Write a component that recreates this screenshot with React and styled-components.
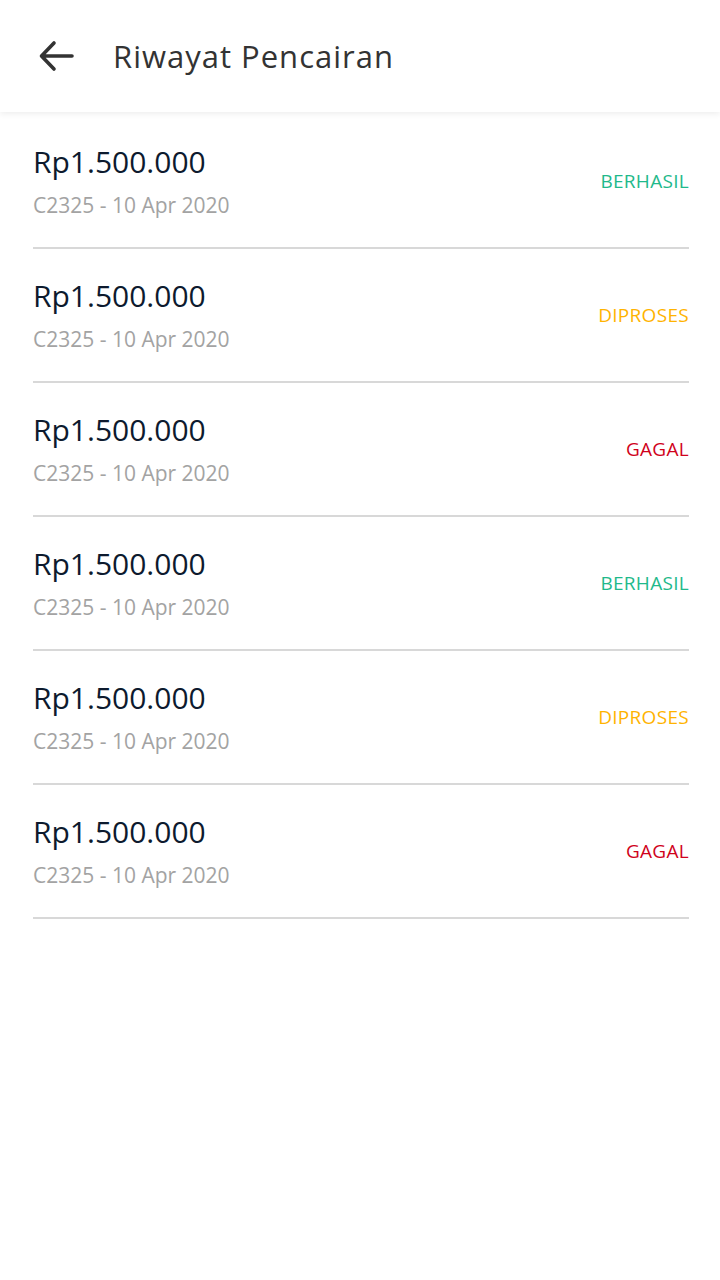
import React from "react";
import styled, { createGlobalStyle } from "styled-components";

const Global = createGlobalStyle`
  html, body { margin: 0; padding: 0; background: #fff; }
  body { font-family: "Open Sans", "Noto Sans", sans-serif; }
`;

const Page = styled.div`
  width: 720px;
  min-height: 1280px;
  background: #fff;
`;

const Header = styled.header`
  height: 112px;
  display: flex;
  align-items: center;
  padding-left: 38px;
  box-sizing: border-box;
  background: #fff;
  box-shadow: 0 2px 6px rgba(0, 0, 0, 0.07);
  position: relative;
  z-index: 1;
`;

const BackButton = styled.button`
  border: 0;
  background: none;
  padding: 0;
  width: 36px;
  height: 36px;
  display: flex;
  align-items: center;
  justify-content: center;
  cursor: pointer;
`;

const Title = styled.h1`
  margin: 0 0 0 39px;
  font-size: 31px;
  font-weight: 500;
  color: #333;
  letter-spacing: 1px;
`;

const List = styled.ul`
  list-style: none;
  margin: 0;
  padding: 3px 31px 0 33px;
`;

const Row = styled.li`
  height: 134px;
  box-sizing: border-box;
  border-bottom: 2px solid #d8d8d8;
  display: flex;
  justify-content: space-between;
  align-items: center;
`;

const Info = styled.div`
  display: flex;
  flex-direction: column;
  gap: 12px;
`;

const Amount = styled.div`
  font-size: 30px;
  line-height: 36px;
  color: #0d1a2e;
`;

const Meta = styled.div`
  font-size: 21px;
  line-height: 26px;
  color: #a3a3a3;
`;

const statusColors = {
  BERHASIL: "#1fb98b",
  DIPROSES: "#ffb300",
  GAGAL: "#d0021b",
};

const Status = styled.div`
  font-size: 19px;
  letter-spacing: 0.3px;
  color: ${(p) => statusColors[p.$status]};
`;

const rows = ["BERHASIL", "DIPROSES", "GAGAL", "BERHASIL", "DIPROSES", "GAGAL"];

export default function App() {
  return (
    <Page>
      <Global />
      <Header>
        <BackButton aria-label="Kembali">
          <svg width="36" height="36" viewBox="0 0 36 36" fill="none">
            <path
              d="M34 18H4M16 5L3.5 18L16 31"
              stroke="#333"
              strokeWidth="3.6"
              strokeLinecap="round"
              strokeLinejoin="round"
            />
          </svg>
        </BackButton>
        <Title>Riwayat Pencairan</Title>
      </Header>
      <List>
        {rows.map((s, i) => (
          <Row key={i}>
            <Info>
              <Amount>Rp1.500.000</Amount>
              <Meta>C2325 - 10 Apr 2020</Meta>
            </Info>
            <Status $status={s}>{s}</Status>
          </Row>
        ))}
      </List>
    </Page>
  );
}
